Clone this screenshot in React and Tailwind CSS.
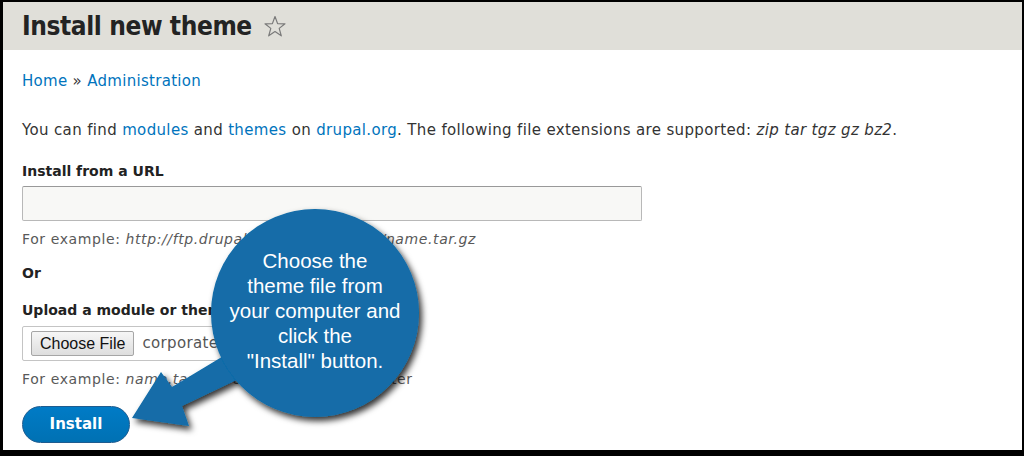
import React from 'react';

const sans = { fontFamily: '"DejaVu Sans", Verdana, sans-serif' };

const Callout = () => (
  <>
    <svg
      className="absolute left-0 top-0 pointer-events-none"
      width="1019"
      height="448"
      viewBox="0 0 1019 448"
    >
      <defs>
        <filter id="callout-shadow" x="-30%" y="-30%" width="160%" height="160%">
          <feDropShadow dx="3" dy="4" stdDeviation="3" floodColor="#000" floodOpacity="0.8" />
        </filter>
      </defs>
      <g filter="url(#callout-shadow)" fill="#126ca8">
        <polygon points="129,416 158,370 169,385 232,347 246,372 179,404 186,424" />
        <circle cx="312" cy="311" r="104" />
      </g>
    </svg>
    <div className="absolute left-[208px] top-[207px] w-[208px] h-[208px] flex items-center justify-center pb-[6px]">
      <p
        className="text-white text-center text-[20.5px] leading-[25px]"
        style={{ fontFamily: '"Liberation Sans", Arial, sans-serif' }}
      >
        Choose the<br />
        theme file from<br />
        your computer and<br />
        click the<br />
        "Install" button.
      </p>
    </div>
  </>
);

const App = () => {
  return (
    <div className="w-[1024px] h-[456px] bg-black pt-[2px] pl-[3px] pr-[2px] pb-[6px]" style={sans}>
      <div className="relative w-full h-full bg-white overflow-hidden">
        <div className="h-[48px] bg-[#e0dfd9] pl-[19px] flex items-center gap-[11px]">
          <h1
            className="text-[26px] font-bold text-[#232323] leading-none tracking-[-0.4px]"
            style={{ fontFamily: '"DejaVu Sans Condensed", "DejaVu Sans", sans-serif' }}
          >
            Install new theme
          </h1>
          <svg width="24" height="24" viewBox="0 0 24 24" className="mt-[1px]">
            <polygon
              points="12,1.5 14.6,8.6 22,8.8 16.2,13.4 18.3,20.8 12,16.5 5.7,20.8 7.8,13.4 2,8.8 9.4,8.6"
              fill="none"
              stroke="#7a7a7a"
              strokeWidth="1.2"
              strokeLinejoin="round"
            />
          </svg>
        </div>

        <div className="pl-[19px]">
          <div className="mt-[21px] text-[15px] leading-[20px] tracking-[0.3px] text-[#0074bd]">
            <a>Home</a> <span className="text-[#333]">»</span> <a>Administration</a>
          </div>

          <p className="mt-[29px] text-[15px] leading-[20px] tracking-[0.35px] text-[#333]">
            You can find <a className="text-[#0074bd]">modules</a> and{' '}
            <a className="text-[#0074bd]">themes</a> on <a className="text-[#0074bd]">drupal.org</a>. The
            following file extensions are supported: <em>zip tar tgz gz bz2</em>.
          </p>

          <div className="mt-[21px] text-[14px] leading-[20px] font-bold text-[#222]">Install from a URL</div>
          <div className="mt-[5px] w-[620px] h-[35px] rounded-[2px] border border-[#b8b8b8] border-t-[#999] bg-[#f8f8f6]" />
          <div className="mt-[9px] text-[14px] leading-[18px] tracking-[0.6px] text-[#595959]">
            For example: <em>http://ftp.drupal.org/files/projects/name.tar.gz</em>
          </div>

          <div className="mt-[15px] text-[14px] leading-[20px] font-bold text-[#222]">Or</div>

          <div className="mt-[17px] text-[14px] leading-[20px] font-bold text-[#222]">
            Upload a module or theme archive to install
          </div>
          <div className="mt-[6px] w-[380px] h-[35px] rounded-[2px] border border-[#c4c4c4] bg-white flex items-center pl-[8px] gap-[8px]">
            <button
              className="h-[25px] px-[8px] rounded-[2px] border border-[#a6a6a6] bg-gradient-to-b from-[#f6f6f6] to-[#dedede] text-[16px] text-[#111] leading-none"
              style={{ fontFamily: '"Liberation Sans", Arial, sans-serif' }}
            >
              Choose File
            </button>
            <span className="text-[15px] tracking-[0.35px] text-[#555]">corporate.tar.gz</span>
          </div>
          <div className="mt-[9px] text-[14px] leading-[18px] tracking-[0.6px] text-[#595959]">
            For example: <em>name.tar.gz</em> from your local computer
          </div>

          <button className="mt-[18px] w-[108px] h-[37px] rounded-full border border-[#1e5c90] bg-gradient-to-b from-[#007bc6] to-[#0071b3] text-white font-bold text-[15px] leading-none">
            Install
          </button>
        </div>

        <Callout />
      </div>
    </div>
  );
};

export default App;
